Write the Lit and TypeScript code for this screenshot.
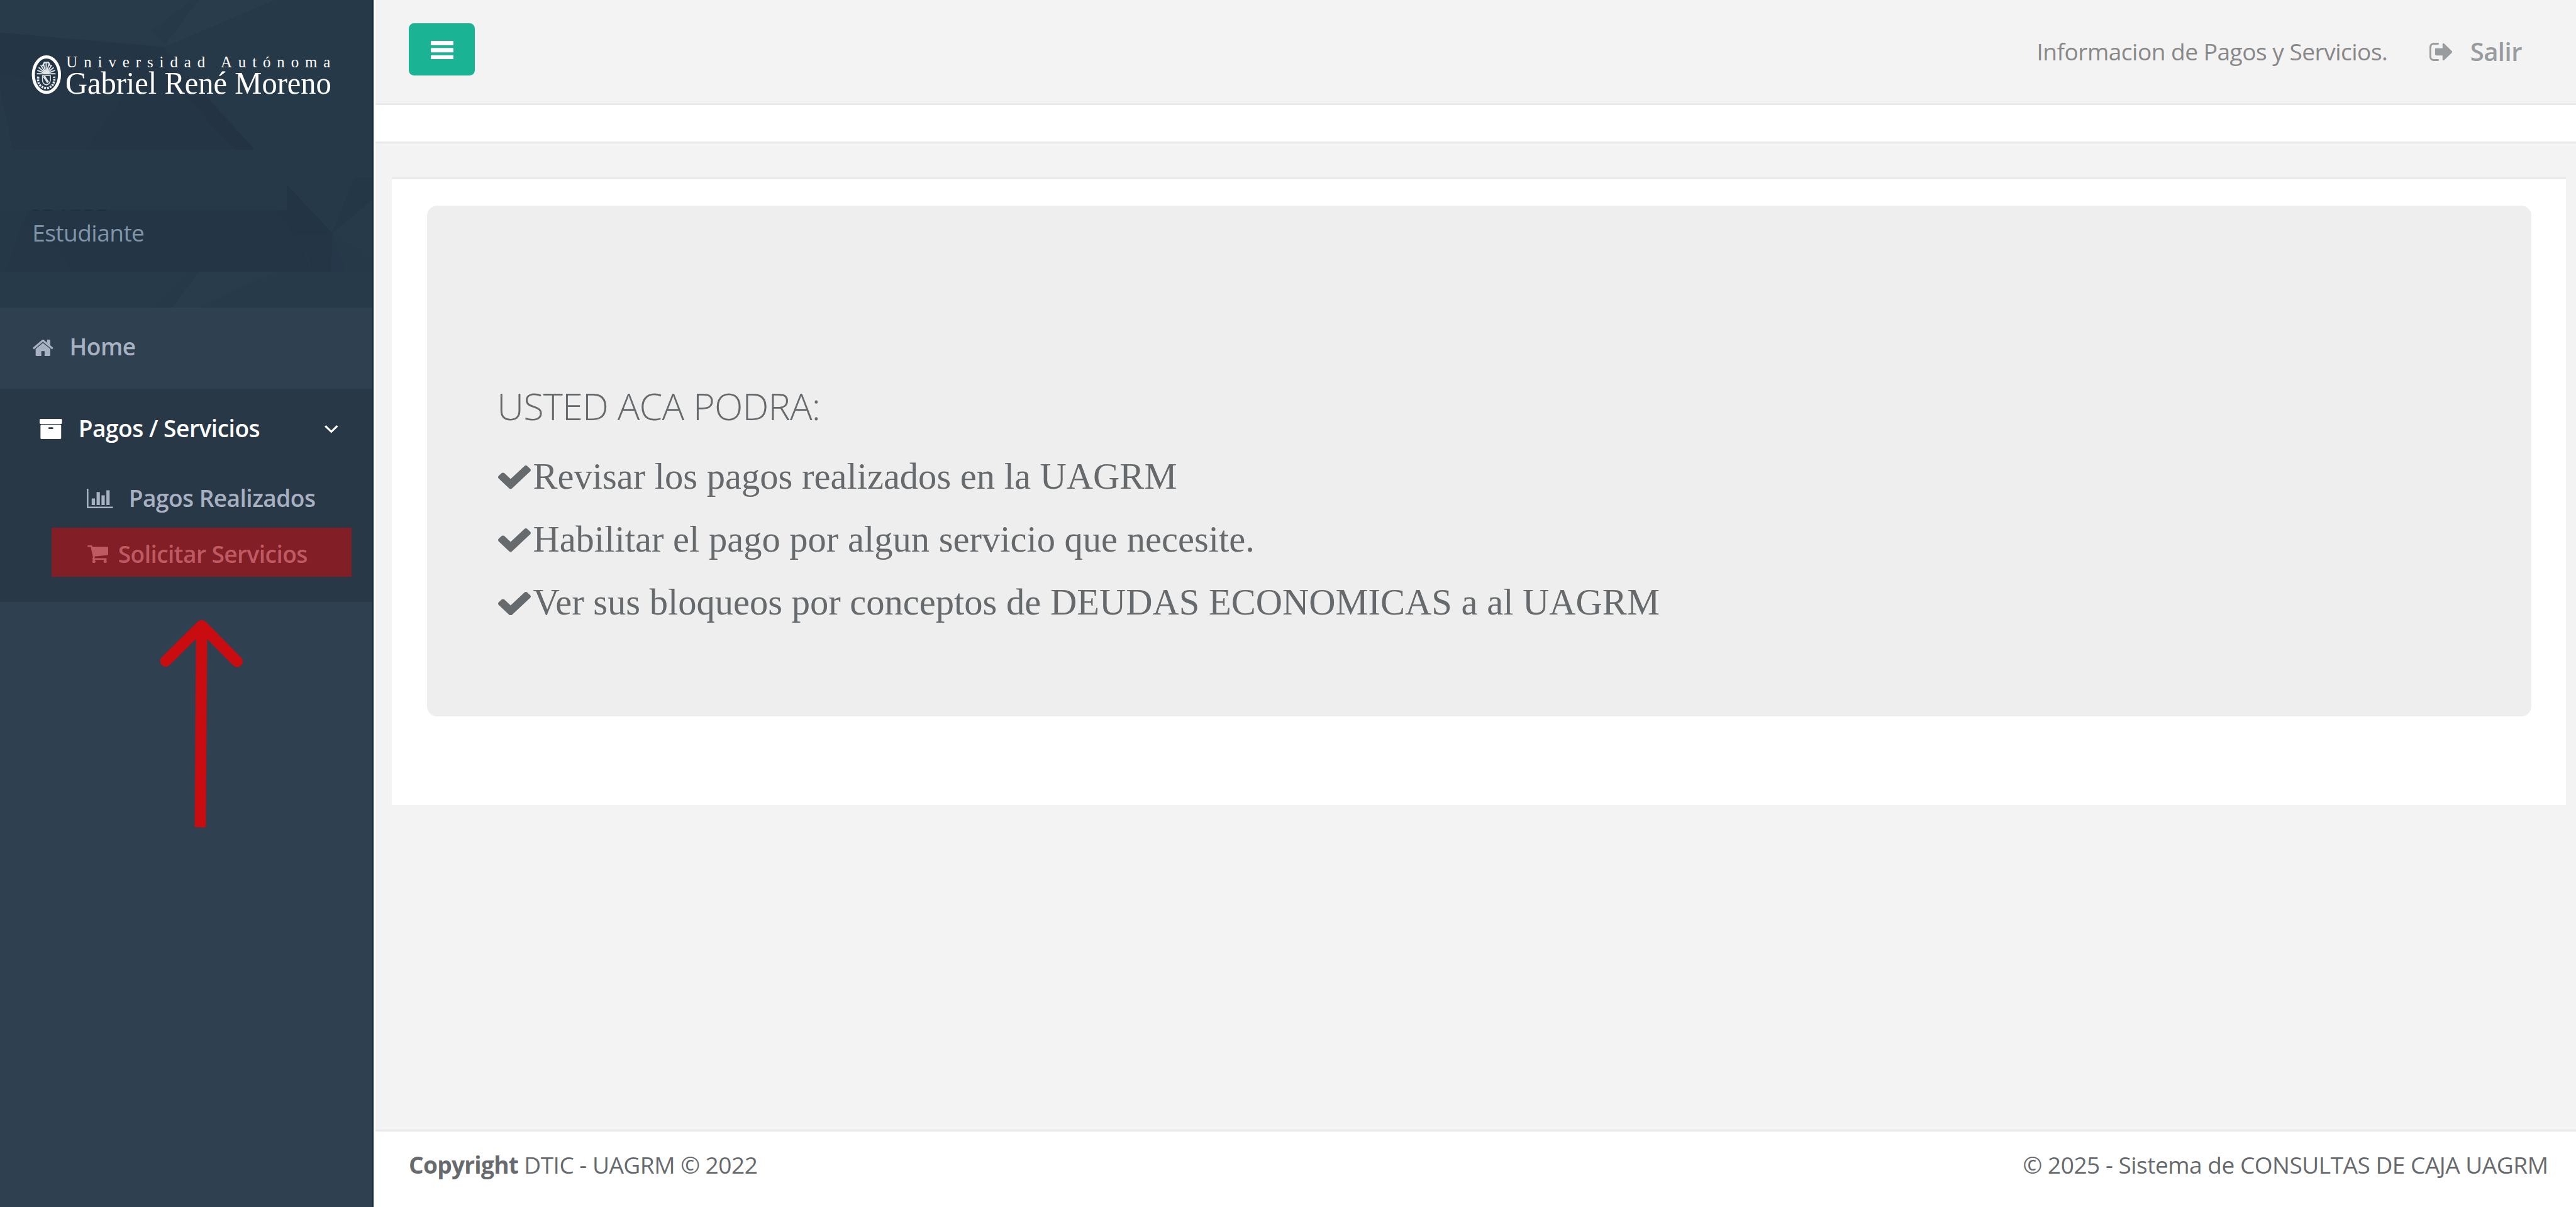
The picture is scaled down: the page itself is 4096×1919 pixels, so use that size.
import { LitElement, html, svg, css, unsafeCSS } from "lit";
import { customElement } from "lit/decorators.js";

// One design unit is 4096/5520 of a CSS pixel.
const UNIT = 4096 / 5520;
const n = (v: number) => +(v * UNIT).toFixed(3);
const u = (...v: number[]) => unsafeCSS(v.map((x) => n(x) + "px").join(" "));

interface Glyph { box: string; d: string }

const GLYPHS: Record<string, Glyph> = {
  home: {
    box: "89 253 1614 1283",
    d: "M1472 992v480q0 26-19 45t-45 19h-384v-384h-256v384h-384q-26 0-45-19t-19-45v-480q0-1 .5-3t.5-3l575-474 575 474q1 2 1 6zm223-69l-62 74q-8 9-21 11h-3q-13 0-21-7l-692-577-692 577q-12 8-24 7-13-2-21-11l-62-74q-8-10-7-23.5t11-21.5l719-599q32-26 76-26t76 26l244 204v-195q0-14 9-23t23-9h192q14 0 23 9t9 23v408l219 182q10 8 11 21.5t-7 23.5z",
  },
  archive: {
    box: "64 128 1664 1536",
    d: "M1088 832q0-26-19-45t-45-19h-256q-26 0-45 19t-19 45 19 45 45 19h256q26 0 45-19t19-45zm576-192v960q0 26-19 45t-45 19h-1408q-26 0-45-19t-19-45v-960q0-26 19-45t45-19h1408q26 0 45 19t19 45zm64-448v256q0 26-19 45t-45 19h-1536q-26 0-45-19t-19-45v-256q0-26 19-45t45-19h1536q26 0 45 19t19 45z",
  },
  chart: {
    box: "0 128 2048 1536",
    d: "M640 896v512h-256v-512h256zm384-512v1024h-256v-1024h256zm1024 1152v128h-2048v-1536h128v1408h1920zm-640-896v768h-256v-768h256zm384-384v1152h-256v-1152h256z",
  },
  cart: {
    box: "64 256 1664 1408",
    d: "M704 1536q0 52-38 90t-90 38-90-38-38-90 38-90 90-38 90 38 38 90zm896 0q0 52-38 90t-90 38-90-38-38-90 38-90 90-38 90 38 38 90zm128-1088v512q0 24-16.5 42.5t-40.5 21.5l-1044 122q13 60 13 70 0 16-24 64h920q26 0 45 19t19 45-19 45-45 19h-1024q-26 0-45-19t-19-45q0-11 8-31.5t16-36 21.5-40 15.5-29.5l-177-823h-204q-26 0-45-19t-19-45 19-45 45-19h256q16 0 28.5 6.5t19.5 15.5 13 24.5 8 26 5.5 29.5 4.5 26h1201q26 0 45 19t19 45z",
  },
  check: {
    box: "121 270 1550 1252",
    d: "M1671 566q0 40-28 68l-724 724-136 136q-28 28-68 28t-68-28l-136-136-362-362q-28-28-28-68t28-68l136-136q28-28 68-28t68 28l294 295 656-657q28-28 68-28t68 28l136 136q28 28 28 68z",
  },
  signout: {
    box: "64 256 1568 1280",
    d: "M704 1440q0 4 1 20t.5 26.5-3 23.5-10 19.5-20.5 6.5h-320q-119 0-203.5-84.5t-84.5-203.5v-704q0-119 84.5-203.5t203.5-84.5h320q13 0 22.5 9.5t9.5 22.5q0 4 1 20t.5 26.5-3 23.5-10 19.5-20.5 6.5h-320q-66 0-113 47t-47 113v704q0 66 47 113t113 47h312l11.5 1 11.5 3 8 5.5 7 9 2 13.5zm928-544q0 26-19 45l-544 544q-19 19-45 19t-45-19-19-45v-288h-448q-26 0-45-19t-19-45v-384q0-26 19-45t45-19h448v-288q0-26 19-45t45-19 45 19l544 544q19 19 19 45z",
  },
  bars: {
    box: "0 0 49 40",
    d: "M2 0h45q2 0 2 2v5.300q0 2-2 2h-45q-2 0-2-2v-5.300q0-2 2-2zM2 15.300h45q2 0 2 2v5.300q0 2-2 2h-45q-2 0-2-2v-5.300q0-2 2-2zM2 30.700h45q2 0 2 2v5.300q0 2-2 2h-45q-2 0-2-2v-5.300q0-2 2-2z",
  },
  angle: {
    box: "0 0 29 17",
    d: "M3.2 0L14.5 11 25.8 0 29 3.2 14.5 17 0 3.2z",
  },
};

const icon = (name: string, w: number, h: number) => html`<svg
  class="icon" width=${n(w)} height=${n(h)} viewBox=${GLYPHS[name].box}
  preserveAspectRatio="none" aria-hidden="true"><path d=${GLYPHS[name].d} fill="currentColor"></path></svg>`;

const rays = Array.from({ length: 11 }, (_, i) => {
  const a = Math.PI + (i * Math.PI) / 10;
  return svg`<line x1="99" y1="158" x2=${99 + 20 * Math.cos(a)} y2=${158 + 23 * Math.sin(a)}></line>`;
});

@customElement("side-bar")
class SideBar extends LitElement {
  static styles = css`
    :host { display: flex; flex-direction: column; position: relative; background: #2f4050;
      font: 600 ${u(50)} "Open Sans", sans-serif; letter-spacing: ${u(-0.75)}; color: #a7b1c2; }
    .icon { display: block; flex: none; }
    .head { position: relative; height: ${u(659)}; box-sizing: border-box; }
    .art { display: block; width: 100%; height: 100%; letter-spacing: 0; }
    .role { position: absolute; left: ${u(69)}; top: ${u(463)}; line-height: ${u(70)};
      font-weight: 400; color: #8095a8; white-space: nowrap; }
    .row { display: flex; align-items: center; line-height: ${u(70)}; white-space: nowrap; }
    .home { height: ${u(168)}; padding: ${u(0, 0, 6, 70)}; gap: ${u(35)}; }
    .home .icon { margin-top: ${u(4)}; }
    .group { height: ${u(457)}; box-sizing: border-box; background: #293846; padding-top: ${u(50)}; }
    .title { color: #fff; padding: ${u(0, 76, 0, 85)}; letter-spacing: ${u(-0.65)}; }
    .title .icon { margin-top: ${u(3)}; }
    .title span { flex: 1; margin-left: ${u(35)}; }
    .item { height: ${u(70)}; margin-top: ${u(80)}; padding-left: ${u(186)}; gap: ${u(34)}; }
    .marked { height: ${u(105)}; width: ${u(642)}; margin: ${u(28, 0, 0, 111)}; box-sizing: border-box;
      padding: ${u(7, 0, 0, 76)}; gap: ${u(21)}; background: #811e26; color: #c05a62; }
    .arrow { position: absolute; left: ${u(330)}; top: ${u(1320)}; }
    .edge { position: absolute; right: 0; top: 0; bottom: 0; width: ${u(3)}; background: #132a3e; }
    .logo-text { font-family: "Liberation Serif", serif; font-weight: 400; fill: #fff; }
  `;

  render() {
    return html`
      <div class="head">
        <svg class="art" viewBox="0 0 801 659" preserveAspectRatio="none">
          <rect width="801" height="659" fill="#263949"></rect>
          <path d="M0 0H412L325 66 355 100 0 70z" fill="#283b4a"></path>
          <path d="M425 0H590L350 102z" fill="#293c4b"></path>
          <path d="M0 70L350 102 545 320H28L0 190z" fill="#253747"></path>
          <path d="M0 70L350 102 500 320H183L270 200 0 160z" fill="#243646"></path>
          <path d="M398 205H440L545 320H503z" fill="#233344"></path>
          <path d="M60 450H615L670 582H12z" fill="#243646"></path>
          <path d="M0 450H62L12 582H0z" fill="#253848"></path>
          <path d="M125 530L155 582H12L50 480z" fill="#253747"></path>
          <path d="M615 397L712 500 708 582H672L655 540 630 500H610L592 450H615z" fill="#243546"></path>
          <path d="M615 397L712 500H630L592 450H615z" fill="#233445"></path>
          <path d="M712 500L740 582H708z" fill="#253748"></path>
          <path d="M712 500L760 380H801V430z" fill="#243747"></path>
          <path d="M712 500L801 425V556z" fill="#273a49"></path>
          <path d="M0 582H801V659H0z" fill="#273a49"></path>
          <path d="M425 582H590L425 659H370z" fill="#293c4b"></path>
          <path d="M405 582H425L370 659H322z" fill="#263949"></path>
          <path d="M70 450h12M92 450h20M134 450h5M152 450h20M181 450h18M209 450h19" stroke="#1d2f3f" stroke-width="2"></path>
          <ellipse cx="99.5" cy="160" rx="28" ry="38" fill="none" stroke="#fff" stroke-width="6.5"></ellipse>
          <g stroke="#dfe4e8" stroke-width="2.6" fill="none">
            ${rays}
            <path d="M91 142l4-8h9l4 8" stroke-width="3"></path>
            <path d="M82 164q-3 22 17 25q20-3 17-25" stroke-width="5" stroke-dasharray="4 2"></path>
            <path d="M91 162h17v10q-1 8-8.500 10q-8-2-8.500-10z" stroke-width="2"></path>
            <path d="M94 163l9 14" stroke-width="5"></path>
          </g>
          <text class="logo-text" x="142" y="144" font-size="33.500" textLength="566" lengthAdjust="spacing">Universidad Autónoma</text>
          <text class="logo-text" x="140" y="200.500" font-size="68" textLength="570" lengthAdjust="spacingAndGlyphs">Gabriel René Moreno</text>
        </svg>
        <div class="role">Estudiante</div>
      </div>
      <div class="row home">${icon("home", 44, 35)}<span>Home</span></div>
      <div class="group">
        <div class="row title">${icon("archive", 48, 43)}<span>Pagos / Servicios</span>${icon("angle", 29, 17)}</div>
        <div class="row item">${icon("chart", 56, 42)}<span>Pagos Realizados</span></div>
        <div class="row marked">${icon("cart", 45, 38)}<span>Solicitar Servicios</span></div>
      </div>
      <svg class="arrow" width=${n(200)} height=${n(460)} viewBox="330 1320 200 460" fill="none" stroke="#c80c0f" stroke-width="24">
        <path d="M432 1345L429 1773"></path>
        <path d="M355 1417L432 1341 508 1418" stroke-linecap="round" stroke-linejoin="round"></path>
      </svg>
      <div class="edge"></div>
    `;
  }
}

@customElement("app-root")
class AppRoot extends LitElement {
  static styles = css`
    :host { display: grid; grid-template-columns: ${u(801)} 1fr; width: 4096px; height: 1919px; overflow: hidden;
      background: #f3f3f3; color: #676a6c; font: 400 ${u(50)} "Open Sans", sans-serif; letter-spacing: ${u(-0.7)}; }
    .icon { display: block; flex: none; }
    .main { display: flex; flex-direction: column; min-width: 0; border-left: 3px solid #fff; }
    .bar { display: flex; align-items: flex-start; height: ${u(221)}; border-bottom: 3px solid #e7eaec; white-space: nowrap; }
    .toggle { display: flex; align-items: center; justify-content: center; width: ${u(141)}; height: ${u(112)};
      margin: ${u(50, 0, 0, 71)}; padding: ${u(2, 0, 0, 2)}; box-sizing: border-box; border: 0;
      border-radius: ${u(11)}; background: #1ab394; color: #fff; }
    .nav { display: flex; align-items: center; margin-left: auto; padding: ${u(76, 116, 0, 0)}; line-height: ${u(70)}; color: #888; }
    .exit { display: flex; align-items: center; gap: ${u(38)}; margin-left: ${u(90)}; font-weight: 600; font-size: ${u(54)}; color: #999c9e; }
    .crumbs { height: ${u(78)}; background: #fff; border-bottom: 3px solid #e7eaec; }
    .panel { margin: ${u(73, 21, 0, 35)}; height: ${u(1284)}; border-top: 3px solid #e7eaec; background: #fff;
      padding: ${u(57, 75, 0, 75)}; }
    .hero { height: ${u(1094)}; box-sizing: border-box; border-radius: ${u(22)}; background: #eee; padding: ${u(378, 0, 0, 150)}; }
    h2 { margin: 0; font-weight: 300; font-size: ${u(80)}; line-height: ${u(100)}; letter-spacing: ${u(-1.1)}; white-space: nowrap; }
    ul { margin: ${u(35, 0, 0, 0)}; padding: 0; list-style: none; letter-spacing: 0; font: 400 ${u(78.9)} / ${u(134.9)} "Liberation Serif", serif; }
    li { display: flex; align-items: center; gap: ${u(4)}; white-space: nowrap; margin-left: ${u(3)}; }
    .foot { margin-top: auto; display: flex; justify-content: space-between; height: ${u(162)};
      border-top: 3px solid #e7eaec; background: #fff; padding: ${u(0, 60, 0, 71)}; line-height: ${u(143)}; white-space: nowrap; }
    .foot b { letter-spacing: ${u(-1)}; }
  `;

  private features = [
    "Revisar los pagos realizados en la UAGRM",
    "Habilitar el pago por algun servicio que necesite.",
    "Ver sus bloqueos por conceptos de DEUDAS ECONOMICAS a al UAGRM",
  ];

  render() {
    return html`
      <side-bar></side-bar>
      <div class="main">
        <div class="bar">
          <button class="toggle" aria-label="Menu">${icon("bars", 49, 40)}</button>
          <div class="nav">
            <span>Informacion de Pagos y Servicios.</span>
            <span class="exit">${icon("signout", 49, 39)}<span>Salir</span></span>
          </div>
        </div>
        <div class="crumbs"></div>
        <div class="panel">
          <div class="hero">
            <h2>USTED ACA PODRA:</h2>
            <ul>${this.features.map((f) => html`<li>${icon("check", 70, 53)}<span>${f}</span></li>`)}</ul>
          </div>
        </div>
        <div class="foot">
          <span><b>Copyright</b> DTIC - UAGRM © 2022</span>
          <span>© 2025 - Sistema de CONSULTAS DE CAJA UAGRM</span>
        </div>
      </div>
    `;
  }
}
